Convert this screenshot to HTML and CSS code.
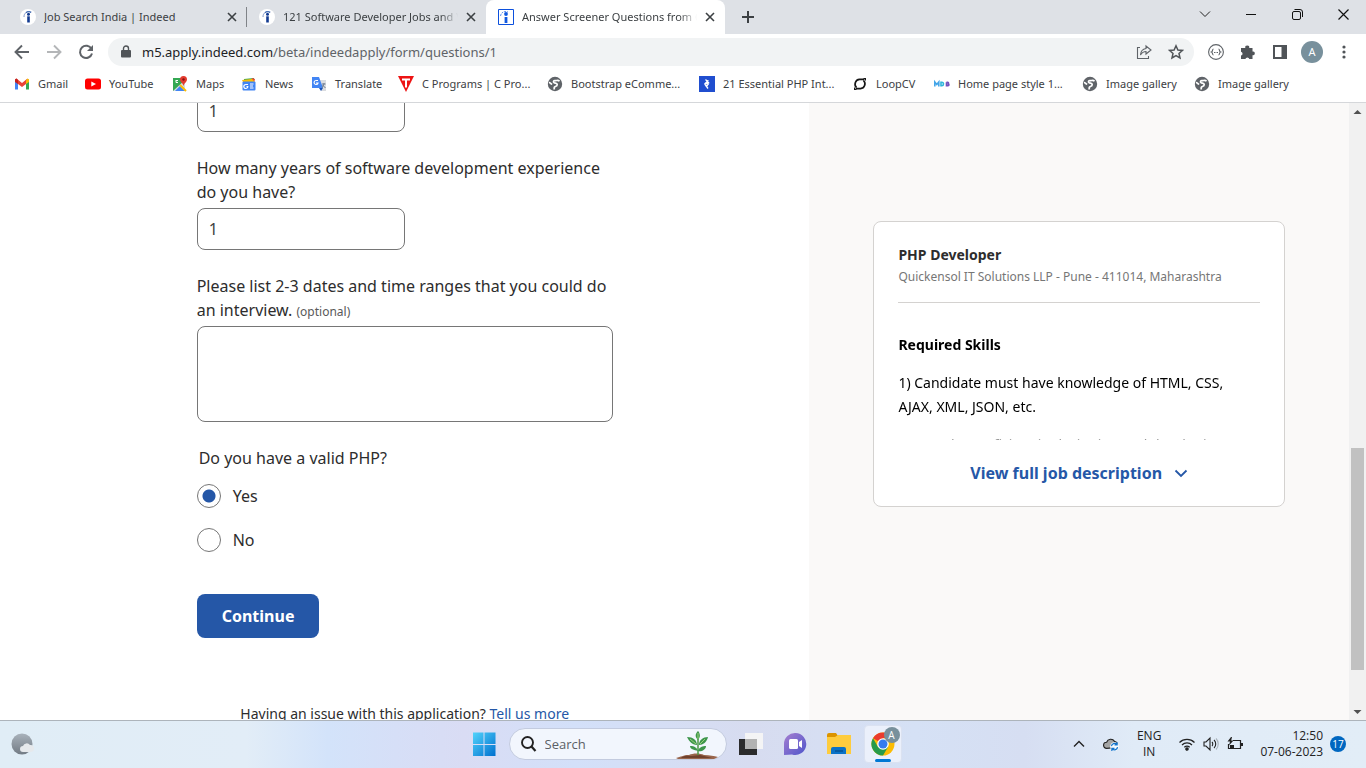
FILE: index.html
```html
<!DOCTYPE html>
<html lang="en">
<head>
<meta charset="utf-8">
<title>Answer Screener Questions from Quickensol IT Solutions LLP</title>
<link rel="stylesheet" href="styles.css">
</head>
<body>
<svg class="defs" aria-hidden="true">
  <symbol id="x" viewBox="0 0 10 10"><path d="M1 1l8 8M9 1L1 9" stroke="#3c4043" stroke-width="1.6"/></symbol>
  <symbol id="indeed" viewBox="0 0 16 16"><circle cx="8" cy="8" r="8" fill="#fff"/><path d="M4 8C4 4 6.500 2 11.500 3" fill="none" stroke="#7d95c9" stroke-width="1"/><path d="M6 3.500c1.500-1.200 3.500-1.200 5 0" fill="none" stroke="#2457a7" stroke-width="1"/><circle cx="8.500" cy="5.300" r="1.500" fill="#123a91"/><path d="M7.200 7.300h2.600v6.200H7.200z" fill="#123a91"/></symbol>
  <symbol id="globe" viewBox="0 0 16 16"><circle cx="8" cy="8" r="7.200" fill="#5f6368"/><path d="M12.500 5.200C11 3.500 9.500 4.800 8 4.600 6.500 4.500 6 5.800 7 6.600c1 .8 3 .3 3.200 1.700.2 1.700-1.200 2-2.200 2.400-1 .5-1 1.500-.6 2.700M2 6.500c1.500 0 1.600 1.500 3.200 1.700" fill="none" stroke="#fff" stroke-width="1.700"/></symbol>
</svg>

<header class="browser">
  <div class="tabstrip">
    <div class="tabs">
      <div class="tab tab-split"><svg class="i16"><use href="#indeed"/></svg><span class="tab-title">Job Search India | Indeed</span><button class="close" aria-label="Close tab"><svg class="i10"><use href="#x"/></svg></button></div>
      <div class="tab"><svg class="i16"><use href="#indeed"/></svg><span class="tab-title fade">121 Software Developer Jobs and Vacancies</span><button class="close" aria-label="Close tab"><svg class="i10"><use href="#x"/></svg></button></div>
      <div class="tab tab-active"><svg class="i16" viewBox="0 0 16 16"><path d="M.5.5h15v15H.5z" fill="#fff" stroke="#0c50dd"/><path d="M2.500 7C3 3.500 6 1.500 10 3" fill="none" stroke="#5d8fee" stroke-dasharray="2 1"/><circle cx="8" cy="5" r="1.900" fill="#1259e0"/><path d="M6.600 8h2.800v6H6.600z" fill="#1259e0"/></svg><span class="tab-title fade">Answer Screener Questions from Quickensol</span><button class="close" aria-label="Close tab"><svg class="i10"><use href="#x"/></svg></button></div>
    </div>
    <button class="newtab" aria-label="New tab"><svg width="12" height="12" viewBox="0 0 12 12"><path d="M6 0v12M0 6h12" stroke="#3c4043" stroke-width="2"/></svg></button>
    <div class="window-controls">
      <button aria-label="Search tabs"><svg width="12" height="12" viewBox="0 0 12 12"><path d="M1 3.500l5 5 5-5" fill="none" stroke="#222"/></svg></button>
      <button aria-label="Minimize"><svg width="10" height="10" viewBox="0 0 10 10"><path d="M0 5.500h10" stroke="#111"/></svg></button>
      <button aria-label="Restore"><svg width="11" height="11" viewBox="0 0 11 11"><rect x=".5" y="2.500" width="8" height="8" rx="1.500" fill="none" stroke="#111"/><path d="M2.500.5h5.500a2.500 2.500 0 0 1 2.500 2.500v5" fill="none" stroke="#111"/></svg></button>
      <button aria-label="Close window"><svg width="11" height="11" viewBox="0 0 11 11"><path d="M.5.5l10 10M10.500.5l-10 10" stroke="#111" stroke-width="1.200"/></svg></button>
    </div>
  </div>

  <div class="toolbar">
    <button class="tool" aria-label="Back"><svg class="i16" viewBox="0 0 16 16"><path d="M15 8H2M8 1.500L1.500 8 8 14.500" fill="none" stroke="#5f6368" stroke-width="1.900"/></svg></button>
    <button class="tool" aria-label="Forward"><svg class="i16" viewBox="0 0 16 16"><path d="M1 8h13M8 1.500L14.500 8 8 14.500" fill="none" stroke="#b4b6b8" stroke-width="1.900"/></svg></button>
    <button class="tool" aria-label="Reload"><svg class="i16" viewBox="0 0 16 16"><path d="M13.500 5A6.100 6.100 0 1 0 14 9.500" fill="none" stroke="#5f6368" stroke-width="2"/><path d="M15 1v6H9z" fill="#5f6368"/></svg></button>
    <div class="omnibox">
      <svg width="10" height="14" viewBox="0 0 10 14"><rect x="1" y="5" width="8" height="7" rx="1" fill="#505458"/><rect y="5" width="10" height="7.500" rx="1" fill="#505458"/><path d="M2.500 6V3.500a2.500 2.500 0 0 1 5 0V6" fill="none" stroke="#505458" stroke-width="1.400"/></svg>
      <span class="url"><span class="host">m5.apply.indeed.com</span>/beta/indeedapply/form/questions/1</span>
      <button class="tool" aria-label="Share"><svg class="i16" viewBox="0 0 16 16"><path d="M4 3.500H1.500v11h11V12" fill="none" stroke="#5f6368" stroke-width="1.100"/><path d="M10 2l5 4-5 4V7.500C7.500 7.500 6 8.500 4.500 11c.2-3.500 2-6 5.500-6.500z" fill="none" stroke="#5f6368" stroke-width="1.100"/></svg></button>
      <button class="tool" aria-label="Bookmark"><svg class="i16" viewBox="0 0 16 16"><path d="M8 1.800l1.900 4.200 4.500.4-3.400 3 1 4.600L8 11.600 4 14l1-4.600-3.400-3 4.500-.4z" fill="none" stroke="#505458" stroke-width="1.500"/></svg></button>
    </div>
    <button class="tool" aria-label="JSON extension"><svg class="i16" viewBox="0 0 16 16"><circle cx="8" cy="8" r="7.400" fill="none" stroke="#5f6368" stroke-width="1.100"/><path d="M5.500 5C4 5 5 7.500 3.500 8 5 8.500 4 11 5.500 11M10.500 5c1.500 0 .5 2.500 2 3-1.500.5-.5 3-2 3" fill="none" stroke="#5f6368" stroke-width="1.100"/><path d="M6 8.500h4" stroke="#5f6368" stroke-dasharray="1 .5"/></svg></button>
    <button class="tool" aria-label="Extensions"><svg class="i16" viewBox="0 0 16 16"><path d="M2 4h3.300a2 2 0 1 1 3.900 0H12.500v3.500a1.900 1.900 0 1 1 0 3.700V15H9.300a2 2 0 0 0-3.900 0H1v-3.400a2 2 0 0 0 0-3.900V4z" fill="#505458"/></svg></button>
    <button class="tool" aria-label="Side panel"><svg class="i16" viewBox="0 0 16 16"><path d="M2 2h12v12H2z" fill="#fff" stroke="#505458" stroke-width="2"/><path d="M9.500 2H14v12H9.500z" fill="#505458"/></svg></button>
    <button class="tool" aria-label="Profile"><span class="avatar">A</span></button>
    <button class="tool" aria-label="Menu"><svg class="i16" viewBox="0 0 16 16" fill="#505458"><circle cx="8" cy="3" r="1.600"/><circle cx="8" cy="8" r="1.600"/><circle cx="8" cy="13" r="1.600"/></svg></button>
  </div>

  <nav class="bookmarks" aria-label="Bookmarks">
    <a href="#"><svg class="i16" viewBox="0 0 16 16"><path d="M1 3.500h1L4 5v8.500H1z" fill="#4285f4"/><path d="M12 5l2-1.500h1v10h-3z" fill="#34a853"/><path d="M1 3.200L2.500 2.500 8 7l5.500-4.500L12 8l-4 3-4-3z" fill="#ea4335"/><path d="M12 4.500l1.500-2 1.500 1V6l-3 2z" fill="#fbbc04"/><path d="M1 3.500L2.500 2.500 4 4v4L1 6z" fill="#c5221f"/></svg>Gmail</a>
    <a href="#"><svg class="i16" viewBox="0 0 16 16"><rect y="2.500" width="16" height="11" rx="2.500" fill="#f00"/><path d="M6.300 5.500L11 8l-4.700 2.500z" fill="#fff"/></svg>YouTube</a>
    <a href="#"><svg class="i16" viewBox="0 0 16 16"><path d="M1 2h12v13H1z" fill="#34a853"/><path d="M1 15L13 4v11z" fill="#d7dce0"/><path d="M3 15l5-5 5 5z" fill="#4285f4"/><path d="M8 9l6 6" stroke="#fbbc04" stroke-width="2"/><path d="M4 4.500h2M4 4v2.500h2" stroke="#fff" fill="none"/><path d="M11.500 0a3.500 3.500 0 0 1 3.500 3.500c0 2.500-2.500 3-3.500 6.500-1-3.500-3.500-4-3.500-6.500A3.500 3.500 0 0 1 11.500 0z" fill="#e33b2e"/><circle cx="11.500" cy="3.500" r="1.200" fill="#811"/></svg>Maps</a>
    <a href="#"><svg class="i16" viewBox="0 0 16 16"><path d="M3 3l10-1v4H3z" fill="#34a853"/><path d="M11 2l3 1-1 4-3-1z" fill="#ea4335"/><path d="M1 4l10-1 3 3H2z" fill="#fbbc04"/><rect x="1.500" y="5.500" width="13" height="9" rx="1" fill="#4285f4"/><path d="M7 8.500H5a2 2 0 1 0 1.800 2H5.500M9 8h3.500M9 10h3M9 12h3.500" stroke="#fff" stroke-width="1.200" fill="none"/></svg>News</a>
    <a href="#"><svg class="i16" viewBox="0 0 16 16"><path d="M7 4h8v11h-5z" fill="#dadce0"/><path d="M1 1h7l4 11H1z" fill="#4285f4"/><path d="M8 12h4l-2 3z" fill="#1a52b5"/><path d="M7 4.500H5A2 2 0 1 0 7 7H5" stroke="#fff" stroke-width="1.200" fill="none"/><path d="M11 8h3.500M13 7v1l-2 4M11.500 9l3 3" stroke="#6f7d90" fill="none"/></svg>Translate</a>
    <a href="#"><svg class="i16" viewBox="0 0 16 16"><path d="M0 0h16L8 16z" fill="#ed1414"/><path d="M4 2.500h8v2H9v7H7v-7H4z" fill="#fff"/></svg>C Programs | C Pro...</a>
    <a href="#"><svg class="i16"><use href="#globe"/></svg>Bootstrap eComme...</a>
    <a href="#"><svg class="i16" viewBox="0 0 16 16"><path d="M0 0h16v16H0z" fill="#204ecf"/><path d="M6.500 3.500L9.500 6.500 6 8.500 9 12.500M9.500 4.500L5.500 8M10 7L7 11" stroke="#fff" stroke-width="1.300" fill="none"/></svg>21 Essential PHP Int...</a>
    <a href="#"><svg class="i16" viewBox="0 0 16 16"><path d="M4.500 11.500A4.800 4.800 0 0 1 7.500 3.300H12M11.500 4.500a4.800 4.800 0 0 1-3 8.200H4" fill="none" stroke="#161616" stroke-width="1.700"/><path d="M11 2h3v3zM5 14H2v-3z" fill="#161616"/></svg>LoopCV</a>
    <a href="#"><svg class="i16" viewBox="0 0 16 16" fill="none" stroke-width="1.600"><path d="M.8 10.500V6l2 2.500L4.800 6v4.500" stroke="#43a5e8"/><path d="M7 6.300v3.400h.8c2.200 0 2.200-3.400 0-3.400z" stroke="#2db5db"/><path d="M12.500 6.300v3.400H14c1.300 0 1.300-1.700 0-1.700h-1.500M12.500 6.300h1.300c1 0 1 1.700 0 1.700" stroke="#7352bd"/></svg>Home page style 1...</a>
    <a href="#"><svg class="i16"><use href="#globe"/></svg>Image gallery</a>
    <a href="#"><svg class="i16"><use href="#globe"/></svg>Image gallery</a>
  </nav>
</header>

<div class="viewport">
  <main class="apply">
    <form class="questions">
      <input class="field field-cut" type="text" value="1" aria-label="Years of experience">
      <div class="question">
        <label for="dev-years">How many years of software development experience do you have?</label>
        <input class="field" id="dev-years" type="text" value="1">
      </div>
      <div class="question">
        <label for="dates">Please list 2-3 dates and time ranges that you could do an interview. <small>(optional)</small></label>
        <textarea class="field-area" id="dates"></textarea>
      </div>
      <fieldset class="choices">
        <legend>Do you have a valid PHP?</legend>
        <label class="choice"><input type="radio" name="php" checked>Yes</label>
        <label class="choice"><input type="radio" name="php">No</label>
      </fieldset>
      <button class="continue" type="button">Continue</button>
      <p class="help">Having an issue with this application? <a href="#">Tell us more</a></p>
    </form>
  </main>
  <aside class="side">
    <section class="card">
      <h2>PHP Developer</h2>
      <p class="company">Quickensol IT Solutions LLP - Pune - 411014, Maharashtra</p>
      <div class="description">
        <h3>Required Skills</h3>
        <p>1) Candidate must have knowledge of HTML, CSS, AJAX, XML, JSON, etc.</p>
        <p>2) Must be proficient in designing and developing</p>
      </div>
      <button class="view-full" type="button">View full job description<svg width="14" height="14" viewBox="0 0 14 14"><path d="M1.500 4.500L7 10l5.500-5.500" fill="none" stroke="#2557a7" stroke-width="1.800"/></svg></button>
    </section>
  </aside>
  <div class="scrollbar">
    <svg width="17" height="17" viewBox="0 0 17 17"><path d="M4.500 11h8l-4-4z" fill="#505050"/></svg>
    <div class="track"><div class="thumb"></div></div>
    <svg width="17" height="17" viewBox="0 0 17 17"><path d="M4.500 7h8l-4 4z" fill="#505050"/></svg>
  </div>
</div>

<footer class="taskbar">
  <svg class="weather" width="24" height="24" viewBox="0 0 24 24"><defs><linearGradient id="moon" x2="0" y2="1"><stop stop-color="#a9b2bb"/><stop offset="1" stop-color="#727b84"/></linearGradient></defs><circle cx="11" cy="12" r="10.500" fill="url(#moon)"/><path d="M12 20a3 3 0 0 1 0-6 4 4 0 0 1 7-1 3.500 3.500 0 0 1 1 7z" fill="#e6e9ec"/></svg>
  <div class="apps">
    <button aria-label="Start"><svg width="24" height="24" viewBox="0 0 24 24"><defs><linearGradient id="win" x2="1" y2="1"><stop stop-color="#52d3fb"/><stop offset="1" stop-color="#0070cf"/></linearGradient></defs><path d="M1 .5h10.500V12H1zM12.500.5h11V12h-11zM1 13h10.500v11H1zM12.500 13h11v11h-11z" fill="url(#win)"/></svg></button>
    <label class="search">
      <svg width="18" height="18" viewBox="0 0 18 18"><circle cx="8.500" cy="7.500" r="5.500" fill="none" stroke="#222" stroke-width="1.900"/><path d="M12.500 11.500l4 4.500" stroke="#222" stroke-width="2.200"/></svg>
      <input type="text" placeholder="Search" aria-label="Search">
      <svg width="44" height="30" viewBox="0 0 44 30"><path d="M0 29c5-1 7-3 13-3 4-2 11-2 15 0 6 0 10 1 14 2l-4 2H2z" fill="#99654c"/><path d="M6 28c4-2 7-1 10-1l8-1 8 2 4 1H5z" fill="#6f412d"/><path d="M22 26V8" stroke="#4d9945" stroke-width="1.500"/><path d="M22 11c-4-4-2-7 0-9 2 2 3 6 0 9zM21 16c-5 0-8-4-10-8 6 0 10 3 10 8zM23 16c0-5 4-8 9-8-1 5-5 8-9 8zM22 22c-4-1-8-2-8-5 5 0 7 2 8 5zM22 22c1-4 5-5 8-5 0 4-5 6-8 5z" fill="#3e964c"/><path d="M22 10V4M20 15l-6-5M24 15l5-5" stroke="#9bd178"/></svg>
    </label>
    <button aria-label="Task view"><svg width="24" height="24" viewBox="0 0 24 24"><path d="M6 1h18v16H6z" fill="#f4f4f5"/><path d="M0 7h18v16H0z" fill="#2b2b2c"/><path d="M6 7h12v10H6z" fill="#b2b2b2"/></svg></button>
    <button aria-label="Chat"><svg width="24" height="24" viewBox="0 0 24 24"><defs><linearGradient id="chat" x2="1" y2="1"><stop stop-color="#a67fd0"/><stop offset="1" stop-color="#4f55cb"/></linearGradient></defs><path d="M12.500 1A11 11 0 1 1 9 22.500L1 23V12A11 11 0 0 1 12.500 1z" fill="url(#chat)"/><rect x="6" y="7" width="9" height="10" rx="1.500" fill="#fff"/><path d="M16 10l3-2v8l-3-2z" fill="#fff"/></svg></button>
    <button aria-label="File Explorer"><svg width="24" height="24" viewBox="0 0 24 24"><path d="M0 3q0-2 2-2h7l2 3-2 3H0z" fill="#dc9400"/><path d="M0 5h8l3-2h13v19H0z" fill="#fecc3e"/><path d="M4 22v-5q0-2 2-2h11q2 0 2 2v5z" fill="#0b72c7"/><path d="M8 19h8" stroke="#075394" stroke-width="1.500"/></svg></button>
    <button class="running" aria-label="Google Chrome"><svg width="24" height="24" viewBox="0 0 24 24"><circle cx="12" cy="12" r="11.500" fill="#fbbc04"/><path d="M12 12L2 6.200A11.500 11.500 0 0 1 22 6.200H12z" fill="#ea3b2e"/><path d="M12 6.200h10a11 11 0 0 1-.5 1.800L12 12z" fill="#fbbc04"/><path d="M2 6.200A11.500 11.500 0 0 0 12 23.500L17 15l-10 0z" fill="#279b4b"/><circle cx="12" cy="12" r="5.800" fill="#fff"/><circle cx="12" cy="12" r="4.500" fill="#367bf0"/></svg><span class="badge">A</span></button>
  </div>
  <div class="tray">
    <svg width="12" height="12" viewBox="0 0 12 12"><path d="M1 8.500l5-5 5 5" fill="none" stroke="#222" stroke-width="1.400"/></svg>
    <svg class="cloud" width="16" height="14" viewBox="0 0 18 16"><path d="M4 13a3.500 3.500 0 0 1 0-7 5 5 0 0 1 9-1 4 4 0 0 1 2 7z" fill="#a5a5a5" stroke="#222" stroke-width="1.300"/><circle cx="13" cy="11" r="5" fill="#f7fbfe"/><path d="M9.500 10.500a3.500 3.500 0 0 1 6-2M16.500 11.500a3.500 3.500 0 0 1-6 2M16 6v3h-3M10 16v-3h3" fill="none" stroke="#1474cc" stroke-width="1.400"/></svg>
    <span class="lang">ENG<br>IN</span>
    <span class="status">
      <svg class="i16" viewBox="0 0 16 16" fill="none" stroke="#222" stroke-width="1.200"><path d="M.5 6.500a10.500 10.500 0 0 1 15 0M3 9a7 7 0 0 1 10 0M5.300 11.300a4 4 0 0 1 5.400 0"/><circle cx="8" cy="13" r="1.200" fill="#222"/></svg>
      <svg class="i16" viewBox="0 0 16 16" fill="none" stroke="#222" stroke-width="1.100"><path d="M1 6h2l4-4v12l-4-4H1zM9 6c1 1 1 3 0 4M11 4c2.300 2 2.300 6 0 8"/><path d="M13 2.500c3 3 3 8 0 11" stroke="#aab3bb"/></svg>
      <svg class="i16" viewBox="0 0 16 16"><path d="M6 4.500h7.500v8H1.500V8" fill="none" stroke="#222" stroke-width="1.200"/><path d="M14 7h2v3h-2zM3 9h4v3H3z" fill="#222"/><path d="M4 1L.5 5.500H3L2 9.500 6.500 4.500H4.200L5 1z" fill="#222"/></svg>
    </span>
    <span class="clock">12:50<br>07-06-2023</span>
    <span class="count">17</span>
  </div>
</footer>
</body>
</html>
```
FILE: styles.css
```css
* { box-sizing: border-box; }
body {
  margin: 0;
  height: 100vh;
  display: flex;
  flex-direction: column;
  overflow: hidden;
  background: #fff;
  color: #2d2d2d;
  font-family: "Noto Sans", sans-serif;
  font-size: 16px;
  line-height: 24px;
}
button { border: 0; padding: 0; background: none; font: inherit; color: inherit; }
svg { display: block; flex: none; }
a { color: #2557a7; text-decoration: none; }
h2, h3, p { margin: 0; }
.defs { position: absolute; width: 0; height: 0; }
.i16 { width: 16px; height: 16px; }
.i10 { width: 10px; height: 10px; }

/* Browser chrome */
.browser {
  flex: none;
  border-bottom: 1px solid #d5d7da;
  font-size: 11px;
  line-height: 16px;
  color: #3c4043;
}
.tabstrip { display: flex; height: 34px; padding-left: 8px; background: #dee1e6; }
.tabs { display: flex; flex: 0 1 717px; min-width: 0; }
.tab { flex: 1; min-width: 0; display: flex; align-items: center; gap: 8px; padding: 0 10px 0 12px; }
.tab-split { background: linear-gradient(#808388, #808388) right center / 1px 20px no-repeat; }
.tab-active { background: #fff; border-radius: 8px 8px 0 0; }
.tab-title { flex: 1; min-width: 0; overflow: hidden; white-space: nowrap; }
.fade { -webkit-mask-image: linear-gradient(90deg, #000 90%, transparent); mask-image: linear-gradient(90deg, #000 90%, transparent); }
.newtab { width: 46px; display: grid; place-items: center; }
.window-controls { display: flex; height: 28px; margin-left: auto; }
.window-controls button { width: 46px; display: grid; place-items: center; }
.toolbar { display: flex; align-items: center; height: 36px; padding: 0 6px; }
.tool { flex: none; width: 32px; height: 28px; display: grid; place-items: center; }
.omnibox {
  flex: 1;
  min-width: 0;
  display: flex;
  align-items: center;
  height: 28px;
  margin: 0 6px;
  padding: 0 2px 0 13px;
  border-radius: 14px;
  background: #f1f3f4;
  font-size: 13px;
}
.url { flex: 1; padding-left: 11px; color: #5f6368; }
.host { color: #202124; }
.avatar {
  width: 22px;
  height: 22px;
  border-radius: 50%;
  background: #78909c;
  color: #fff;
  line-height: 22px;
}
.bookmarks {
  display: grid;
  grid-template-columns: 71px 87px 69px 70px 87px 149px 152px 153px 82px 148px 112px 112px;
  align-items: center;
  height: 32px;
  padding: 0 14px 4px;
}
.bookmarks a { display: flex; align-items: center; gap: 8px; color: #3c4043; white-space: nowrap; }

/* Page */
.viewport {
  flex: 1;
  min-height: 0;
  display: grid;
  grid-template-columns: minmax(0, 3fr) minmax(0, 2fr) auto;
  grid-template-rows: minmax(0, 1fr);
  overflow: hidden;
}
.questions { max-width: 416px; margin: 0 auto; display: flex; flex-direction: column; }
.question { display: flex; flex-direction: column; gap: 4px; margin-top: 24px; }
.question small { font-size: 12px; line-height: 16px; color: #595959; }
.field, .field-area {
  border: 1px solid #767676;
  border-radius: 8px;
  background: #fff;
  color: #424242;
  font: inherit;
}
.field { width: 50%; height: 42px; padding: 0 11px; }
.field-cut { margin-top: -13px; }
.field-area { display: block; width: 100%; height: 96px; resize: none; }
.choices { margin: 24px 0 0; padding: 0; border: 0; }
.choices legend { padding: 0 2px; margin-bottom: 14px; }
.choice { display: flex; align-items: center; gap: 12px; }
.choice + .choice { margin-top: 20px; }
.choice input {
  appearance: none;
  width: 24px;
  height: 24px;
  margin: 0;
  border: 1px solid #767676;
  border-radius: 50%;
  background: #fff;
}
.choice input:checked { background: radial-gradient(circle, #2557a7 6px, #fff 7px); }
.continue {
  align-self: flex-start;
  height: 44px;
  margin-top: 42px;
  padding: 0 25px;
  border-radius: 8px;
  background: #2557a7;
  color: #fff;
  font-weight: 700;
}
.help { margin-top: 64px; font-size: 14px; text-align: center; }
.side { padding: 118px 64px 0; background: #faf9f8; }
.card {
  padding: 24px 24px 10px;
  border: 1px solid #d4d2d0;
  border-radius: 8px;
  background: #fff;
  font-size: 14px;
}
.card h2 { font-size: 14px; line-height: 18px; }
.company { padding-bottom: 12px; border-bottom: 1px solid #d4d2d0; font-size: 12px; line-height: 26px; color: #767676; }
.description {
  height: 137px;
  padding-top: 30px;
  overflow: hidden;
  color: #000;
  -webkit-mask-image: linear-gradient(#000 85%, rgba(0, 0, 0, .4));
  mask-image: linear-gradient(#000 85%, rgba(0, 0, 0, .4));
}
.description h3 { font-size: 14px; }
.description p { margin-top: 14px; }
.view-full {
  width: 100%;
  height: 46px;
  display: flex;
  align-items: center;
  justify-content: center;
  gap: 12px;
  margin-top: 10px;
  color: #2557a7;
  font-size: 16px;
  font-weight: 700;
}
.scrollbar { width: 17px; display: flex; flex-direction: column; background: #f1f1f1; }
.track { flex: 1; padding: 0 2px; display: flex; flex-direction: column; justify-content: flex-end; }
.thumb { height: 38%; margin-bottom: 33px; background: #c1c1c1; }

/* Taskbar */
.taskbar {
  flex: none;
  height: 48px;
  display: grid;
  grid-template-columns: 1fr auto 1fr;
  align-items: center;
  padding: 0 20px 2px 11px;
  border-top: 1px solid #adb4bb;
  background: linear-gradient(90deg, #e0edf6 0%, #e2edf7 18%, #d3e3fa 24%, #d6dff7 29%, #d9dcf4 34%, #d3e0f9 42%, #d7dcf0 55%, #d5e1f5 67%, #d6def2 75%, #e0ebf7 83%, #e2edf7 100%);
  color: #222;
  font-family: "Open Sans", sans-serif;
  font-size: 12px;
  line-height: 16px;
}
.apps { display: flex; align-items: center; margin-left: 16px; }
.apps button { position: relative; width: 44px; height: 38px; display: grid; place-items: center; }
.apps button:first-child { width: 24px; margin-right: 13px; }
.search {
  width: 218px;
  height: 32px;
  display: flex;
  align-items: center;
  gap: 8px;
  margin-right: 2px;
  padding: 0 6px 0 9px;
  border: 1px solid #c3cbdf;
  border-radius: 16px;
  background: #f2f6fd;
}
.search input { flex: 1; min-width: 0; border: 0; padding: 0; background: none; font: inherit; font-size: 13px; }
.search input::placeholder { color: #5b5f66; }
.apps .running { width: 38px; margin-left: 3px; border: 1px solid #dbe2f1; border-radius: 4px; background: #ebf0fb; }
.running::after { content: ""; position: absolute; bottom: 0; width: 16px; height: 3px; border-radius: 2px; background: #0078d4; }
.badge {
  position: absolute;
  top: 1px;
  right: 1px;
  width: 16px;
  height: 16px;
  border-radius: 50%;
  background: #78909c;
  color: #fff;
  font-size: 10px;
}
.tray { display: flex; align-items: center; justify-content: flex-end; }
.cloud { margin: 0 18px; }
.lang { text-align: center; }
.status { display: flex; gap: 8px; margin: 0 17px 0 18px; }
.clock { text-align: right; }
.count {
  width: 16px;
  height: 16px;
  margin-left: 7px;
  border-radius: 50%;
  background: #0067c0;
  color: #fff;
  font-size: 10px;
  text-align: center;
}
```
